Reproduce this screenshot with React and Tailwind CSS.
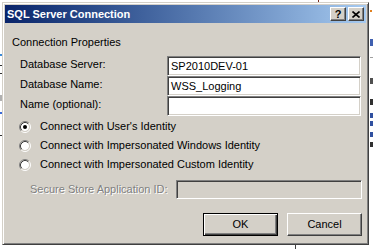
import React from 'react';

const font = { fontFamily: '"Liberation Sans", Arial, sans-serif' };

const Radio = ({ checked }) => (
  <svg width="12" height="12" viewBox="0 0 12 12" className="shrink-0">
    <circle cx="6" cy="6" r="4" fill="#fff" />
    <path d="M2.11 9.89 A5.5 5.5 0 0 1 9.89 2.11" fill="none" stroke="#808080" />
    <path d="M9.89 2.11 A5.5 5.5 0 0 1 2.11 9.89" fill="none" stroke="#fff" />
    <path d="M2.82 9.18 A4.5 4.5 0 0 1 9.18 2.82" fill="none" stroke="#404040" />
    <path d="M9.18 2.82 A4.5 4.5 0 0 1 2.82 9.18" fill="none" stroke="#d4d0c8" />
    {checked && <circle cx="6" cy="6" r="2" fill="#000" />}
  </svg>
);

const Field = ({ label, value }) => (
  <div className="flex items-center h-[20px] pl-[15px]">
    <span className="mb-[3px]">{label}</span>
    <div className="ml-auto mr-[1px] w-[194px] h-[20px] bg-white border border-t-[#808080] border-l-[#808080] border-r-white border-b-white shadow-[inset_1px_1px_0_#404040,inset_-1px_-1px_0_#d4d0c8] flex items-center pl-[3px]">
      {value}
    </div>
  </div>
);

const Option = ({ label, checked }) => (
  <div className="flex items-center h-[19px] pl-[14px]">
    <Radio checked={checked} />
    <span className="ml-[9px]">{label}</span>
  </div>
);

const TitleButton = ({ children }) => (
  <div className="w-[16px] h-[14px] bg-[#d4d0c8] border border-t-white border-l-white border-r-[#404040] border-b-[#404040] shadow-[inset_-1px_-1px_0_#808080] flex items-center justify-center text-black font-bold text-[11px] leading-none">
    {children}
  </div>
);

// slivers of the page that shows round the dialog
const marks = [
  'left-[318px] top-0 w-[1px] h-[3px] bg-[#7a2a1a]',
  'left-[295px] top-[244px] w-[1px] h-[5px] bg-[#404040]',
  'left-[370px] top-[10px] w-[2px] h-[2px] bg-[#e08020]',
  'left-[370px] top-[39px] w-[3px] h-[7px] bg-[#4060b0]',
  'left-[370px] top-[57px] w-[3px] h-[1px] bg-[#a0a0a0]',
  'left-[370px] top-[78px] w-[3px] h-[6px] bg-[#505050]',
  'left-[370px] top-[99px] w-[3px] h-[6px] bg-[#303030]',
  'left-[370px] top-[113px] w-[3px] h-[5px] bg-[#3050a0]',
  'left-[370px] top-[121px] w-[3px] h-[5px] bg-[#3050a0]',
  'left-[370px] top-[132px] w-[3px] h-[5px] bg-[#3050a0]',
  'left-[370px] top-[142px] w-[3px] h-[5px] bg-[#303030]',
  'left-0 top-[54px] w-[2px] h-[2px] bg-[#3a8ad8]',
  'left-0 top-[65px] w-[2px] h-[1px] bg-[#303030]',
  'left-0 top-[73px] w-[2px] h-[1px] bg-[#303030]',
  'left-0 top-[95px] w-[2px] h-[6px] bg-[#b0b0b0]',
  'left-0 top-[112px] w-[2px] h-[2px] bg-[#3a6ad8]',
  'left-0 top-[135px] w-[2px] h-[1px] bg-[#303030]',
];

export default function App() {
  return (
    <div className="relative w-[373px] h-[249px] bg-white overflow-hidden text-[11px] text-black" style={font}>
      {marks.map((m, i) => (
        <div key={i} className={`absolute ${m}`} />
      ))}

      {/* dialog window */}
      <div className="absolute left-[2px] top-[2px] w-[367px] h-[243px] bg-[#d4d0c8] border border-t-[#d4d0c8] border-l-[#d4d0c8] border-r-[#404040] border-b-[#404040] shadow-[inset_1px_1px_0_#fff,inset_-1px_-1px_0_#808080] p-[2px] flex flex-col">
        <div className="h-[18px] bg-gradient-to-r from-[#0a246a] to-[#a6caf0] flex items-center pl-[2px] pr-[2px]">
          <span className="text-white font-bold text-[11px]">SQL Server Connection</span>
          <div className="ml-auto flex gap-[2px]">
            <TitleButton>?</TitleButton>
            <TitleButton>
              <svg width="8" height="7" viewBox="0 0 8 7">
                <path d="M0.5 0.5 L7.5 6.5 M7.5 0.5 L0.5 6.5" stroke="#000" strokeWidth="1.6" />
              </svg>
            </TitleButton>
          </div>
        </div>

        <div className="flex flex-col pr-[4px]">
          <div className="mt-[12px] h-[14px] leading-[14px] pl-[7px]">Connection Properties</div>

          <div className="mt-[7px] flex flex-col">
            <Field label="Database Server:" value="SP2010DEV-01" />
            <Field label="Database Name:" value="WSS_Logging" />
            <Field label="Name (optional):" value="" />
          </div>

          <div className="mt-[1px] flex flex-col">
            <Option label="Connect with User's Identity" checked />
            <Option label="Connect with Impersonated Windows Identity" />
            <Option label="Connect with Impersonated Custom Identity" />
          </div>

          <div className="mt-[6px] flex items-center h-[19px] pl-[25px]">
            <span className="text-[#808080] [text-shadow:1px_1px_0_#fff]">Secure Store Application ID:</span>
            <div className="ml-auto w-[186px] h-[19px] bg-[#d4d0c8] border border-t-[#808080] border-l-[#808080] border-r-white border-b-white shadow-[inset_1px_1px_0_#404040,inset_-1px_-1px_0_#d4d0c8]" />
          </div>

          <div className="mt-[14px] flex justify-end gap-[9px]">
            <button className="w-[75px] h-[23px] bg-[#d4d0c8] border border-black shadow-[inset_1px_1px_0_#fff,inset_-1px_-1px_0_#404040,inset_-2px_-2px_0_#808080] text-[11px] text-black">
              OK
            </button>
            <button className="w-[75px] h-[23px] bg-[#d4d0c8] border border-t-white border-l-white border-r-[#404040] border-b-[#404040] shadow-[inset_-1px_-1px_0_#808080] text-[11px] text-black">
              Cancel
            </button>
          </div>
        </div>
      </div>
    </div>
  );
}
